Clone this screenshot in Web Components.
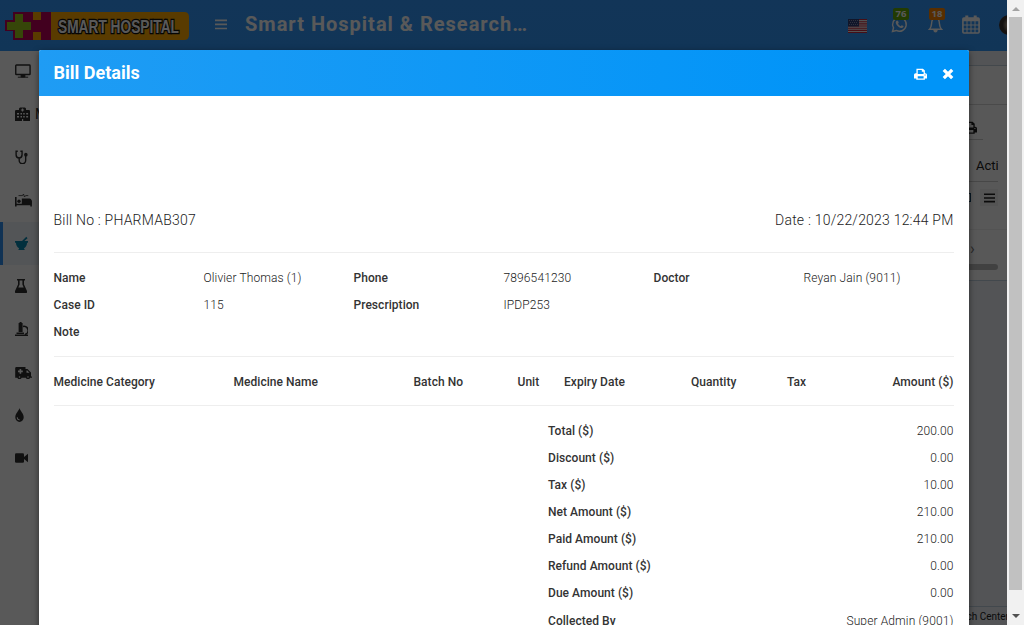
<!DOCTYPE html>
<html lang="en"><head><meta charset="utf-8"><title>Bill Details</title>
<style>html,body{margin:0;height:100%;overflow:hidden;font-family:Roboto,sans-serif}</style></head>
<body><hospital-page></hospital-page>
<script>
const ICONS = {
 print:['0 0 16 16','<path fill="currentColor" fill-rule="evenodd" d="M3 1h8l2.400 2.400V7H14a2 2 0 0 1 2 2v5h-2.600v1.700H2.800V14H0V9a2 2 0 0 1 2-2h1zM4.600 2.600V8h7.200V5H9.600V2.600zM4.600 11v3h7.200v-3zM13 8.700v1.200h1.200V8.700z"/>'],
 close:['0 0 12 12','<path d="M1.800 1.800l8.400 8.400M10.200 1.800l-8.400 8.400" stroke="currentColor" stroke-width="3.300"/>'],
 bars:['0 0 12 11','<path d="M0 1.300h12M0 5.400h12M0 9.500h12" stroke="currentColor" stroke-width="1.700"/>'],
 desktop:['0 0 17 14','<rect x=".8" y="1" width="15.200" height="9.600" rx=".7" fill="none" stroke="currentColor" stroke-width="1.500"/><path d="M3 13.200h11M6.500 11h4v2h-4z" stroke="currentColor" fill="currentColor"/>'],
 hospital:['0 0 15 14','<path fill="currentColor" fill-rule="evenodd" d="M4 3V1.500L5 .500h5l1 1V3h3.200l.8.800V14H0V3.800L.800 3zM6.900 1.500v1H5.900v.9h1v1h1.200v-1h1v-.9h-1v-1zM2 6v1.500h2V6zm3.500 0v1.500h1.500V6zM8.200 6v1.500h1.500V6zM11.200 6v1.500h1.900V6zM2 9v1.500h2V9zm3.500 0v1.500h1.500V9zM8.200 9v1.500h1.500V9zm3 0v1.500h1.900V9zM7 12v2h1.200v-2z"/>'],
 stetho:['0 0 14 14','<path d="M3 1.300H1.200v3.500a3.200 3.200 0 0 0 6.400 0V1.300H5.800M4.500 8v2.300a3.200 3.200 0 0 0 7 0V5" fill="none" stroke="currentColor" stroke-width="1.500"/><circle cx="11.700" cy="4.700" r="1.900" fill="currentColor"/>'],
 bed:['0 0 17 14','<path d="M.8 4v9.500M1 11.500h15M16.100 7.500v6" stroke="currentColor" stroke-width="1.600"/><path fill="currentColor" d="M6.800 5.500h7.700a2 2 0 0 1 2 2v4H6.800z"/><circle cx="4" cy="8.300" r="1.700" fill="currentColor"/><path d="M3.500 2.600h4l1-1.600 1 3 1.100-1.400h2.700" fill="none" stroke="currentColor" stroke-width=".8"/>'],
 mortar:['0 0 14 14','<path fill="currentColor" d="M7 5.500L12.200.8l1.300 1.500-4 3.200zM0 5h14v1.700h-1c-.2 3-1.500 4.600-3.400 5.500l1 1.800H3.500l1-1.800C2.600 11.300 1.200 9.700 1 6.700H0z"/>'],
 flask:['0 0 12 14','<path fill="currentColor" fill-rule="evenodd" d="M2 0h8v1.600H9v4l3 6.500q.5 1.900-1.300 1.900H1.300Q-.5 14 0 12.100l3-6.500v-4H2zM4.600 1.600v4L3.300 8.500h5.400L7.400 5.600v-4z"/>'],
 micro:['0 0 13 14','<path fill="currentColor" d="M3.600 1h4v9h-4zM4.600 0h2v1h-2zM1.500 10.500H9V12H1.500zM0 12.500h13V14H0z"/><path d="M8 4.500a3.900 3.900 0 0 1 2 8" fill="none" stroke="currentColor" stroke-width="1.600"/>'],
 ambulance:['0 0 17 13','<path fill="currentColor" fill-rule="evenodd" d="M1 1h9.500v2h2L16 6.500v4h1v1.200H.200V1.800zM4.600 3v1.600H3v1.600h1.600v1.600h1.600V6.200h1.600V4.600H6.200V3zM11.500 4.500v2.300h3l-2.200-2.300z"/><g fill="#fff" stroke="currentColor" stroke-width="1.400"><circle cx="4.500" cy="11" r="1.500"/><circle cx="13" cy="11" r="1.500"/></g>'],
 drop:['0 0 10 14','<path fill="currentColor" fill-rule="evenodd" d="M5 0c.5 2.500 4.700 5.600 4.700 9.200a4.700 4.700 0 0 1-9.400 0C.300 5.600 4.500 2.500 5 0zM2 9.300a3 3 0 0 0 3.300 3v-.9A2.100 2.100 0 0 1 3 9.300z"/>'],
 video:['0 0 13 10','<rect width="9" height="9.500" y=".200" rx="1.200" fill="currentColor"/><path fill="currentColor" d="M9 4L13 .8v8.400L9 6z"/>'],
 whatsapp:['0 0 18 18','<path d="M1.600 16.400l1.100-3.900A7.200 7.200 0 1 1 5.600 15.300z" fill="none" stroke="currentColor" stroke-width="1.500"/><path fill="currentColor" d="M6 4.900l1.400.2.800 2-.8 1q1 1.900 2.900 2.700l1-1.100 2 1c-.1 1.700-1.300 2.200-2.500 2C7.700 12 5 8.900 5 6.800Q5 5.500 6 4.900z"/>'],
 bell:['0 0 16 17','<path d="M1.600 13.200C4 11 3.600 8.500 4 6c.4-3 2-4 4-4s3.600 1 4 4c.4 2.500 0 5 2.400 7.200z" fill="none" stroke="currentColor" stroke-width="1.500"/><path fill="currentColor" d="M7 0h2v2H7zM5.600 14h4.800Q10 16.500 8 16.500T5.600 14z"/>'],
 calendar:['0 0 18 19','<rect x=".9" y="3" width="16.200" height="15" rx="1" fill="none" stroke="currentColor" stroke-width="1.600"/><path d="M1 3h16v3.300H1zM3.300.5h3v4h-3zM11.700.5h3v4h-3z" fill="currentColor"/><path d="M1 10h16M1 14h16M5 6v12M9 6v12M13 6v12" stroke="currentColor" stroke-width="1"/>']
};
const define=(name,html)=>customElements.define(name,class extends HTMLElement{
 constructor(){super();this.attachShadow({mode:'open'}).innerHTML=typeof html==='function'?html(this):html}
});
define('ui-icon',el=>{const [v,p]=ICONS[el.getAttribute('name')];
 return `<style>:host{display:block;flex:none}svg{display:block;width:100%;height:100%}</style><svg viewBox="${v}" preserveAspectRatio="none">${p}</svg>`});

define('hospital-logo',`<style>:host{display:block;width:184px;height:28px}svg{display:block}text{font:bold 17.500px "Liberation Sans Narrow","Liberation Sans",sans-serif}</style>
<svg width="184" height="28" viewBox="0 0 184 28"><path fill="#fa0" d="M28 0h151q5 0 5 5v18q0 5-5 5H28z"/>
<path fill="#be0059" d="M8 0h20v8h8V0h10v28H36v-8h-8v8H8v-9H0V8h8z"/><path fill="#9bc81c" d="M10 2h8v8h8v8h-8v8h-8v-8H2v-8h8z"/>
<text x="53" y="20.500" textLength="121" lengthAdjust="spacingAndGlyphs" fill="#fff" stroke="#111" stroke-width="2.600" paint-order="stroke">SMART HOSPITAL</text></svg>`);

define('flag-us',`<style>:host{display:block;width:19px;height:14px}svg{display:block}</style><svg width="19" height="14"><rect width="19" height="14" fill="#eee"/><path d="M0 .5h19M0 2.700h19M0 4.900h19M0 7h19M0 9.200h19M0 11.400h19M0 13.500h19" stroke="#c92c40" stroke-width="1.080"/><rect width="11" height="7.500" fill="#304078"/><path d="M1 1.500h9M2 3.500h8M1 5.500h9" stroke="#ccd" stroke-width=".7" stroke-dasharray=".8 1.200"/></svg>`);

define('count-badge',`<style>:host{position:absolute;display:block;height:12px;padding:0 2.500px;border-radius:2px;font:bold 9.500px/12px "Open Sans",sans-serif;color:#fff;background:var(--c)}</style><slot></slot>`);

define('top-bar',`<style>
:host{display:flex;align-items:flex-start;height:51px;background:linear-gradient(#3498fb,#3399fa);color:#fff;box-sizing:border-box;padding:12px 0 0 5px;overflow:hidden}
.menu{width:12px;height:11px;margin:7px 0 0 26px}.title{margin-left:18px;font:bold 20px/24px Roboto,sans-serif;letter-spacing:1px;width:308px;flex:none;white-space:nowrap}
.right{display:flex;align-items:flex-start;margin-left:auto;margin-right:-12px}.right flag-us{margin:7px 0 0;flex:none}
.b{position:relative;flex:none}.w{margin:4px 0 0 24px;width:17px;height:17px}.l{margin:4px 0 0 20px;width:15px;height:17px}.c{width:18px;height:19px;margin:3px 0 0 19px}
ui-icon{width:100%;height:100%}.menu{flex:none}count-badge{top:-8px;left:2px}.l count-badge{left:1px}
.face{width:20px;height:20px;border-radius:50%;background:radial-gradient(circle at 62% 50%,#a99782 0 28%,#3a312d 55%);margin:3px 0 0 19px;flex:none}</style>
<hospital-logo></hospital-logo><ui-icon class="menu" name="bars"></ui-icon><div class="title">Smart Hospital &amp; Research…</div>
<div class="right"><flag-us></flag-us><div class="b w"><ui-icon name="whatsapp"></ui-icon><count-badge style="--c:#61a808">76</count-badge></div>
<div class="b l"><ui-icon name="bell"></ui-icon><count-badge style="--c:#fd8502">18</count-badge></div><div class="b c"><ui-icon name="calendar"></ui-icon></div><div class="face"></div></div>`);

define('side-item',`<style>:host{display:flex;align-items:center;height:43px;box-sizing:border-box;padding:0 0 1px 15px;color:#303030;font-size:14px;white-space:nowrap;gap:5px}
:host([active]){background:#edf2f8;border-left:3px solid #2f91f1;padding-left:12px;color:#0787b0}</style><slot></slot>`);
const side=[['desktop',16,14],['hospital',15,14,'M'],['stetho',13,14],['bed',17,14],['mortar',13,14],['flask',12,14],['micro',13,14],['ambulance',17,13],['drop',9,14],['video',13,10]];
define('side-menu',`<style>:host{display:block;width:50px;background:#fff}side-item:first-of-type{margin-top:-1px}</style>`+side.map(([n,w,h,t],i)=>`<side-item ${i===4?'active':''}><ui-icon name="${n}" style="width:${w}px;height:${h}px"></ui-icon>${t||''}</side-item>`).join(''));

define('list-page',`<style>
:host{display:flex;flex-direction:column;align-items:flex-end;background:#edf1f7;color:#222;font-size:14px}
.gap{height:14px;width:100%;border-bottom:1px solid #c0ced9;flex:none}
.card{width:100%;height:214px;background:#fcfcfc;border-bottom:1px solid #bccddd;display:flex;flex-direction:column;align-items:flex-end;flex:none}
.card>div{box-sizing:border-box;flex:none}
.h{height:39px;border-bottom:1px solid #d3d3d3;width:100%}.t{height:35px;width:60px;margin-right:24px;padding:16px 0 0 40px;border-bottom:1px solid #ccc}.t ui-icon{width:14px;height:13px}
.a{height:42px;width:51px;margin-right:9px;padding:18px 0 0 29px;overflow:hidden;border-bottom:1px solid #ccc;white-space:nowrap;font-size:13px}
.m{height:48px;width:60px;padding:7px 9px 0 13px;border-bottom:1px solid #eee;display:flex;justify-content:space-between}
.e{width:11px;height:9px;border:1.500px solid #17486c;box-sizing:border-box;margin-top:4px}
.v{width:18px;height:17px;background:#f1f1f1;padding:4px 0 0 3.500px;box-sizing:border-box}.v ui-icon{width:11px;height:10px}
.n{height:33px;width:60px;padding:9px 0 0 23px;color:#777;font-size:16px}.s{height:6px;width:51px;background:#bbb;border-radius:3px;margin:1px 9px 0 0}
.foot{margin-top:auto;height:19px;width:100%;box-sizing:border-box;border-top:1px solid #bccddd;font-size:10px;line-height:19px;white-space:nowrap;display:flex;justify-content:flex-end}.foot span{margin-right:-2px}
</style><div class="gap"></div><div class="card"><div class="h"></div><div class="t"><ui-icon name="print"></ui-icon></div><div class="a">Acti</div><div class="m"><div class="e"></div><div class="v"><ui-icon name="bars"></ui-icon></div></div><div class="n">›</div><div class="s"></div></div><div class="foot"><span>ch Center</span></div>`);

define('scroll-bar',`<style>:host{display:flex;flex-direction:column;align-items:center;background:#f1f1f1;width:17px;height:100%}i{flex:none;width:0;height:0;border:4px solid transparent}.u{border-bottom-color:#a3a3a3;border-top:0;margin:7px 0 6px}.d{border-top-color:#505050;border-bottom:0;margin:24px 0 7px}.k{width:13px;flex:1;background:#c1c1c1}</style><i class="u"></i><div class="k"></div><i class="d"></i>`);

define('data-pair',`<style>:host{display:contents}b{font-weight:500}.v{font-weight:300;color:#222;letter-spacing:.12px}</style><b><slot name="k"></slot></b><span class="v"><slot></slot></span>`);
const pair=([k,v])=>`<data-pair><span slot="k">${k}</span>${v}</data-pair>`;
define('bill-info',`<style>:host{display:grid;grid-template-columns:repeat(6,150px);grid-auto-rows:27px;line-height:27px;height:104px;box-sizing:border-box;padding-top:12px;border-bottom:1px solid #eee;letter-spacing:.05px}</style>`+[['Name','Olivier Thomas (1)'],['Phone','7896541230'],['Doctor','Reyan Jain (9011)'],['Case ID','115'],['Prescription','IPDP253'],['',''],['Note','']].map(pair).join(''));
define('medicine-head',`<style>:host{display:grid;grid-template-columns:180px 180px 104px 46.500px 127px 96px 1fr;height:49px;line-height:50px;box-sizing:border-box;border-bottom:1px solid #eee;font-weight:500;letter-spacing:.04px}.last{display:flex;justify-content:space-between}</style><span>Medicine Category</span><span>Medicine Name</span><span>Batch No</span><span>Unit</span><span>Expiry Date</span><span>Quantity</span><span class="last"><span>Tax</span><span>Amount ($)</span></span>`);
define('total-row',`<style>:host{display:flex;justify-content:space-between;height:27.170px;line-height:27px}b{font-weight:500}.v{font-weight:300;color:#222;letter-spacing:.12px}</style><b><slot name="k"></slot></b><span class="v"><slot></slot></span>`);
const totals=[['Total ($)','200.00'],['Discount ($)','0.00'],['Tax ($)','10.00'],['Net Amount ($)','210.00'],['Paid Amount ($)','210.00'],['Refund Amount ($)','0.00'],['Due Amount ($)','0.00'],['Collected By','Super Admin (9001)']];
define('bill-totals',`<style>:host{display:block;margin:11.550px 0 0 494.500px;letter-spacing:.05px}</style>`+totals.map(([k,v])=>`<total-row><span slot="k">${k}</span>${v}</total-row>`).join(''));

define('bill-modal',`<style>
:host{display:block;background:#fff;color:#333;font-size:12px;box-shadow:0 2px 6px rgba(0,0,0,.5);border-radius:2px 2px 0 0;overflow:hidden}
header{height:46px;box-sizing:border-box;background:linear-gradient(to right,#1f9cf4,#0094f8 90%);color:#fff;display:flex;align-items:center;padding:0 15px 0 14.500px}
h4{margin:0 auto 1px 0;font:bold 18px/24px Roboto,sans-serif}header ui-icon{margin-top:2px}
.p{width:13px;height:12px;margin-right:15px}.x{width:12px;height:12px}
.body{padding:0 15.500px 0 14.500px}.top{height:157px;display:flex;justify-content:space-between;align-items:flex-end;box-sizing:border-box;padding-bottom:22px;border-bottom:1px solid #eee;font-size:14px;line-height:20px;font-weight:300;color:#222;letter-spacing:.21px}
</style><header><h4>Bill Details</h4><ui-icon class="p" name="print"></ui-icon><ui-icon class="x" name="close"></ui-icon></header>
<div class="body"><div class="top"><span>Bill No : PHARMAB307</span><span>Date : 10/22/2023 12:44 PM</span></div><bill-info></bill-info><medicine-head></medicine-head><bill-totals></bill-totals></div>`);

define('hospital-page',`<style>
:host{display:grid;grid-template-columns:minmax(0,1fr) 17px;width:1024px;height:625px;overflow:hidden}
.app{position:relative;display:grid;grid-template:51px 574px/50px minmax(0,1fr);overflow:hidden}top-bar{grid-column:1/3}
.shade{position:absolute;inset:0;background:rgba(0,0,0,.65)}bill-modal{position:absolute;left:39px;top:50px;width:930px;height:640px}
</style><div class="app"><top-bar></top-bar><side-menu></side-menu><list-page></list-page><div class="shade"></div><bill-modal></bill-modal></div><scroll-bar></scroll-bar>`);
</script></body></html>
